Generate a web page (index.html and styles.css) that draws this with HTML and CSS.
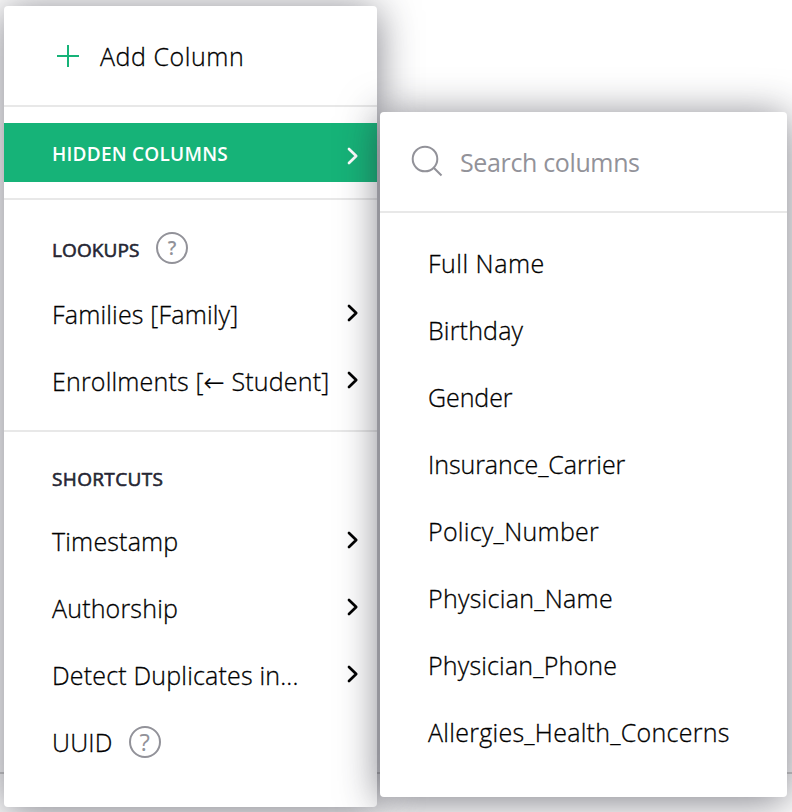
FILE: index.html
```html
<!DOCTYPE html>
<html lang="en">
<head>
<meta charset="utf-8">
<title>Add Column</title>
<link rel="stylesheet" href="styles.css">
</head>
<body>
<svg class="defs" width="0" height="0"><defs>
<symbol id="chevron" viewBox="0 0 12 18"><path d="M2 2L9.2 9L2 16" fill="none" stroke="currentColor" stroke-width="2.7" stroke-linecap="round" stroke-linejoin="round"/></symbol>
</defs></svg>
<main class="stage">
<nav class="menu main-menu">
  <div class="add-column"><svg class="plus" viewBox="0 0 22 22"><path d="M11 0V22M0 11H22" stroke="currentColor" stroke-width="2"/></svg><span>Add Column</span></div>
  <hr>
  <div class="hidden-columns"><span class="heading-text">HIDDEN COLUMNS</span><svg class="chevron"><use href="#chevron"/></svg></div>
  <hr>
  <div class="heading lookups"><span class="heading-text">LOOKUPS</span><span class="help small">?</span></div>
  <div class="item"><span class="label">Families [Family]</span><svg class="chevron"><use href="#chevron"/></svg></div>
  <div class="item"><span class="label">Enrollments [<span class="arrow">←</span> Student]</span><svg class="chevron"><use href="#chevron"/></svg></div>
  <hr class="section">
  <div class="heading shortcuts"><span class="heading-text">SHORTCUTS</span></div>
  <div class="item"><span class="label">Timestamp</span><svg class="chevron"><use href="#chevron"/></svg></div>
  <div class="item"><span class="label">Authorship</span><svg class="chevron"><use href="#chevron"/></svg></div>
  <div class="item"><span class="label">Detect Duplicates in...</span><svg class="chevron"><use href="#chevron"/></svg></div>
  <div class="item uuid"><span class="label">UUID</span><span class="help">?</span></div>
</nav>
<section class="menu columns-menu">
  <div class="search"><svg class="magnifier" viewBox="0 0 32 32"><circle cx="14" cy="14" r="12.3"/><path d="M22.7 22.7L30.5 30.5"/></svg><span>Search columns</span></div>
  <hr>
  <div class="columns">
    <div class="item"><span class="label wider">Full Name</span></div>
    <div class="item"><span class="label">Birthday</span></div>
    <div class="item"><span class="label tight">Gender</span></div>
    <div class="item"><span class="label tight">Insurance_Carrier</span></div>
    <div class="item"><span class="label wide">Policy_Number</span></div>
    <div class="item"><span class="label wide">Physician_Name</span></div>
    <div class="item"><span class="label">Physician_Phone</span></div>
    <div class="item"><span class="label wide">Allergies_Health_Concerns</span></div>
  </div>
</section>
</main>
</body>
</html>
```
FILE: styles.css
```css
* { box-sizing: border-box; }
body { margin: 0; background: #fff; color: #000; font-family: "Open Sans", sans-serif; font-size: 25px; font-weight: 300; line-height: 34px; white-space: nowrap; overflow: hidden; }
.defs { display: block; }
.stage { display: flex; align-items: flex-start; gap: 3px; height: 812px; padding: 6px 0 0 4px; overflow: hidden; background: linear-gradient(#fff 772px, #d0d0d0 772px, #d0d0d0 774px, #fff 774px); }
.menu { flex: none; background: #fff; border-radius: 4px; box-shadow: 0 4px 40px rgba(38, 38, 51, .6); }
.main-menu { width: 373px; height: 801px; }
.columns-menu { width: 407px; height: 685px; margin-top: 106px; position: relative; }
hr { height: 2px; margin: 0; border: 0; background: #e8e8e8; }
.add-column { display: flex; align-items: center; gap: 21px; height: 99px; padding: 3px 0 0 53px; letter-spacing: .55px; }
.add-column span { margin-bottom: 2px; -webkit-text-stroke: .3px; }
.plus { width: 22px; height: 22px; color: #16b378; margin-bottom: 2px; }
.hidden-columns { display: flex; align-items: center; justify-content: space-between; height: 59px; margin: 16px 0; padding: 0 18px 0 48px; background: #16b378; color: #fff; }
.hidden-columns .chevron { margin-top: 6px; }
.heading-text { font-size: 19px; font-weight: 600; }
.hidden-columns .heading-text { margin-top: 2px; letter-spacing: .24px; }
.heading { display: flex; align-items: center; padding-left: 48px; color: #262633; }
.heading .heading-text { font-weight: 400; -webkit-text-stroke: .6px; }
.lookups { height: 81px; gap: 16px; padding-top: 19px; }
.lookups .heading-text { width: 88px; letter-spacing: .1px; }
.shortcuts { height: 76px; padding-top: 17px; }
.shortcuts .heading-text { letter-spacing: .35px; }
.item { display: flex; align-items: center; justify-content: space-between; height: 67px; padding: 0 18px 0 48px; }
.label { margin-bottom: 2px; letter-spacing: .18px; -webkit-text-stroke: .3px; }
.columns .label { margin-bottom: 3px; }
.label.tight { letter-spacing: -.07px; }
.label.wide { letter-spacing: .28px; }
.label.wider { letter-spacing: .5px; }
.item .chevron { margin-bottom: 4px; }
.chevron { flex: none; width: 12px; height: 18px; }
.section { margin-top: 15px; }
.arrow { font-family: "Noto Sans", "DejaVu Sans", sans-serif; }
.help { display: flex; align-items: center; justify-content: center; width: 32px; height: 32px; border: 2px solid #929299; border-radius: 50%; color: #929299; font-size: 24px; font-weight: 400; line-height: 28px; margin-bottom: 2px; }
.help.small { font-size: 19px; font-weight: 600; margin-bottom: 4px; }
.uuid { justify-content: flex-start; gap: 16px; }
.search { display: flex; align-items: center; gap: 17px; height: 99px; padding: 2px 0 0 31px; color: #929299; font-weight: 400; letter-spacing: -.36px; }
.search span { margin-bottom: 2px; }
.magnifier { width: 32px; height: 32px; margin-bottom: 4px; fill: none; stroke: #929299; stroke-width: 2; }
.columns { padding-top: 18px; }
```
